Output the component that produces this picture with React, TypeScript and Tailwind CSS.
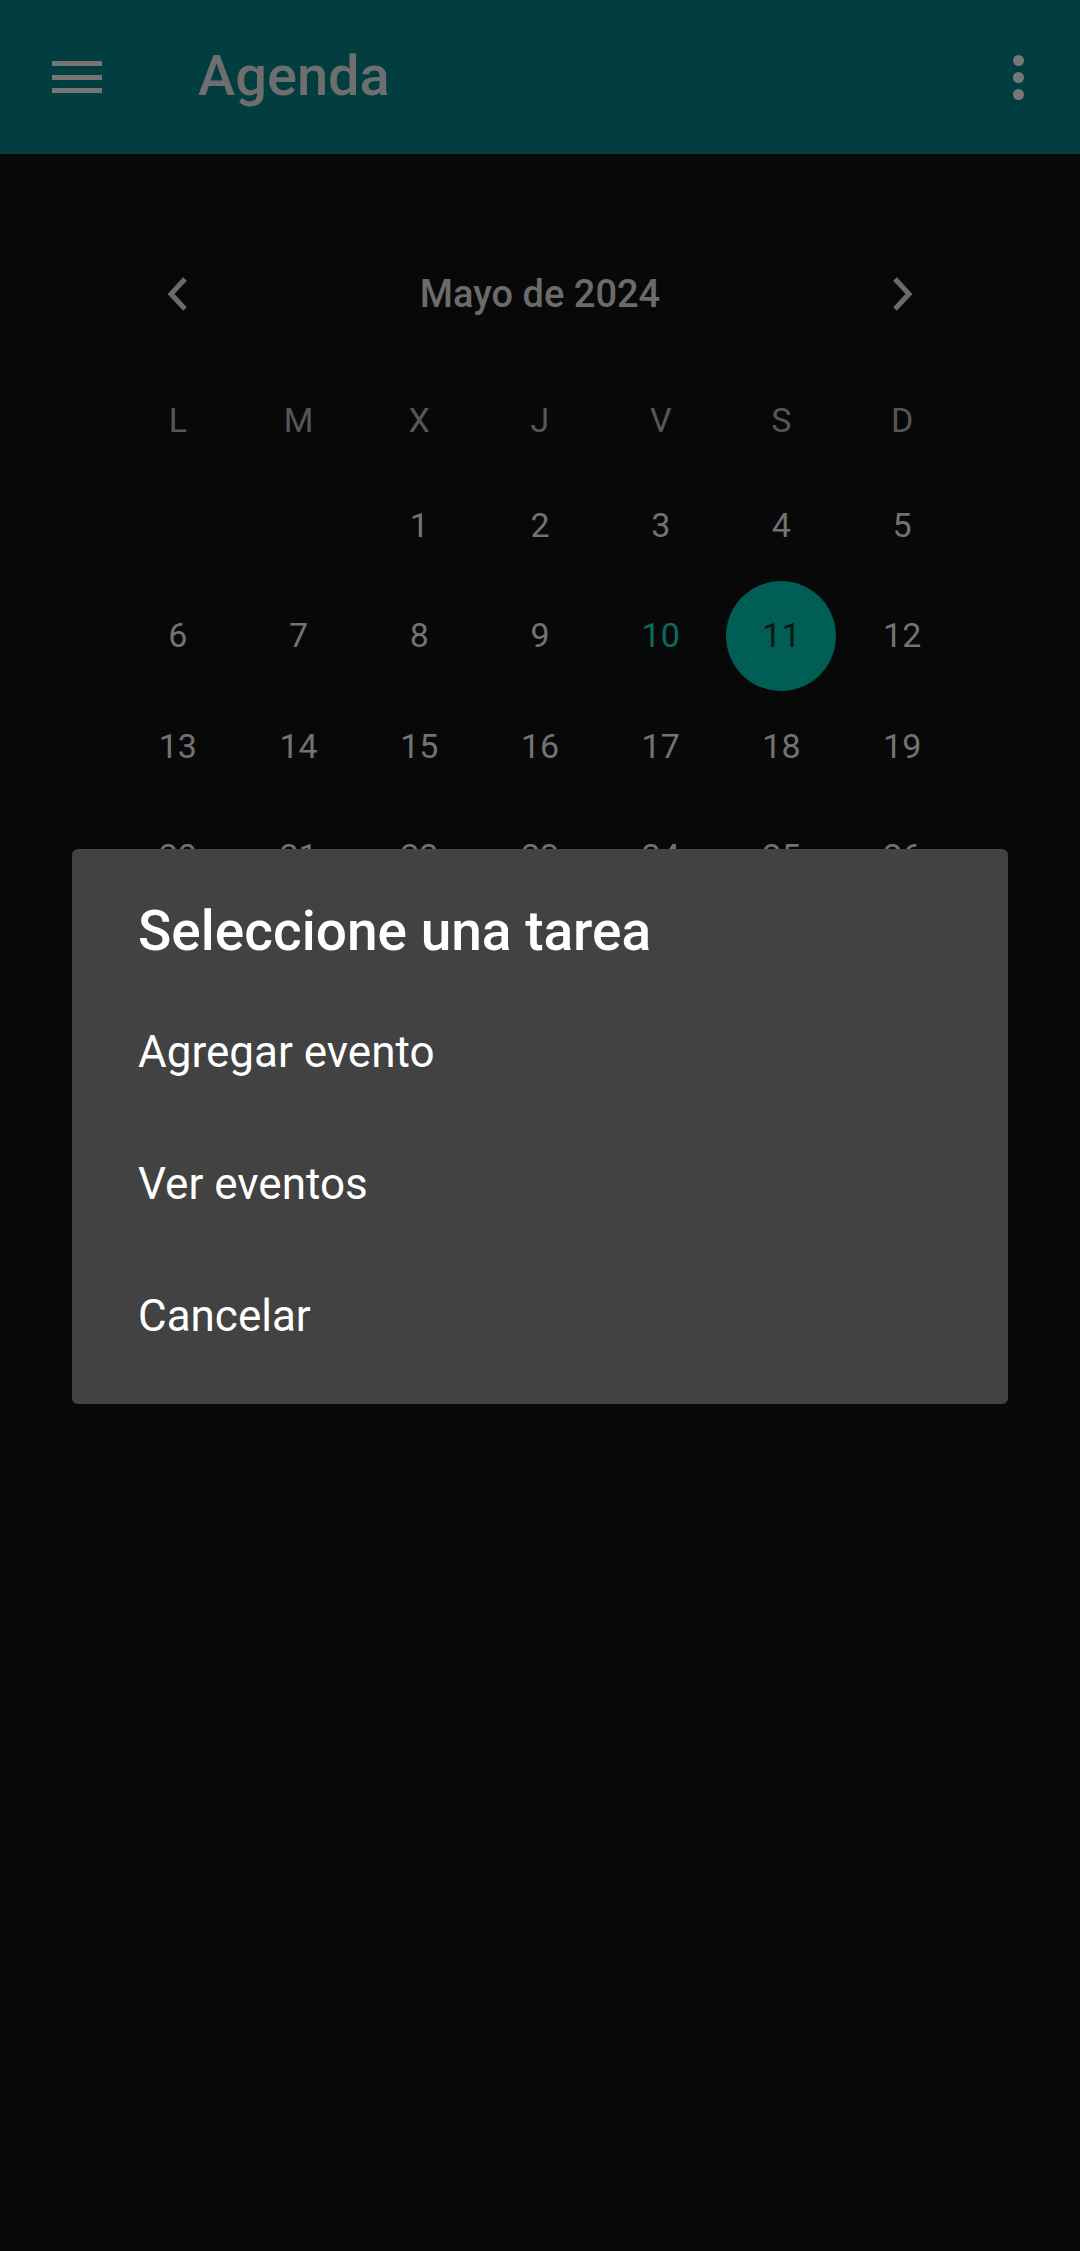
import React from 'react';

const weekDays = ['L', 'M', 'X', 'J', 'V', 'S', 'D'];

const weeks: (number | null)[][] = [
  [null, null, 1, 2, 3, 4, 5],
  [6, 7, 8, 9, 10, 11, 12],
  [13, 14, 15, 16, 17, 18, 19],
  [20, 21, 22, 23, 24, 25, 26],
  [27, 28, 29, 30, 31, null, null],
];

const Chevron: React.FC<{ dir: 'left' | 'right' }> = ({ dir }) => (
  <svg width="22" height="36" viewBox="0 0 22 36" fill="none">
    <path
      d={dir === 'left' ? 'M18 3 L4 18 L18 33' : 'M4 3 L18 18 L4 33'}
      stroke="#6b6b6b"
      strokeWidth="5"
    />
  </svg>
);

const DayCell: React.FC<{ day: number | null }> = ({ day }) => {
  if (day === 11) {
    return (
      <div className="flex items-center justify-center">
        <div className="w-[110px] h-[110px] rounded-full bg-[#015e55] flex items-center justify-center text-[#0a1816]">
          {day}
        </div>
      </div>
    );
  }
  return (
    <div className={`flex items-center justify-center ${day === 10 ? 'text-[#0b6a60]' : 'text-[#727272]'}`}>
      {day ?? ''}
    </div>
  );
};

export default function App() {
  return (
    <div className="relative w-[1080px] h-[2251px] bg-[#080808] overflow-hidden" style={{ fontFamily: 'Roboto, "Noto Sans", sans-serif' }}>
      {/* toolbar */}
      <header className="h-[154px] bg-[#023d40] flex items-center">
        <div className="w-[198px] pl-[52px]">
          <div className="w-[50px] flex flex-col gap-[8.5px]">
            <span className="block h-[5px] bg-[#757575]" />
            <span className="block h-[5px] bg-[#757575]" />
            <span className="block h-[5px] bg-[#757575]" />
          </div>
        </div>
        <h1 className="flex-1 text-[56px] font-medium text-[#6e6e6e] leading-none pb-[2px]">Agenda</h1>
        <div className="w-[124px] flex flex-col items-center gap-[6px]">
          <span className="block w-[11px] h-[11px] rounded-full bg-[#777]" />
          <span className="block w-[11px] h-[11px] rounded-full bg-[#777]" />
          <span className="block w-[11px] h-[11px] rounded-full bg-[#777]" />
        </div>
      </header>

      {/* calendar */}
      <div className="w-[845px] mx-auto mt-[85px]">
        <div className="h-[110px] grid grid-cols-7 items-center">
          <div className="flex justify-center">
            <Chevron dir="left" />
          </div>
          <div className="col-span-5 text-center text-[38px] font-medium text-[#6b6b6b]">Mayo de 2024</div>
          <div className="flex justify-center">
            <Chevron dir="right" />
          </div>
        </div>
        <div className="mt-[21px] h-[100px] grid grid-cols-7 items-center text-[34px] text-[#565656]">
          {weekDays.map((d) => (
            <div key={d} className="text-center">{d}</div>
          ))}
        </div>
        <div className="text-[34px]">
          {weeks.map((w, i) => (
            <div key={i} className="h-[110.5px] grid grid-cols-7">
              {w.map((d, j) => (
                <DayCell key={j} day={d} />
              ))}
            </div>
          ))}
        </div>
      </div>

      {/* dialog */}
      <div className="absolute left-[72px] top-[849px] w-[936px] h-[555px] bg-[#424242] rounded-[6px] pl-[66px] pt-[49px] pb-[22px]">
        <h2 className="text-[55px] leading-[66px] font-medium text-white">Seleccione una tarea</h2>
        <ul className="mt-[22px] text-[44px] text-white">
          <li className="h-[132px] leading-[132px]">Agregar evento</li>
          <li className="h-[132px] leading-[132px]">Ver eventos</li>
          <li className="h-[132px] leading-[132px]">Cancelar</li>
        </ul>
      </div>
    </div>
  );
}
